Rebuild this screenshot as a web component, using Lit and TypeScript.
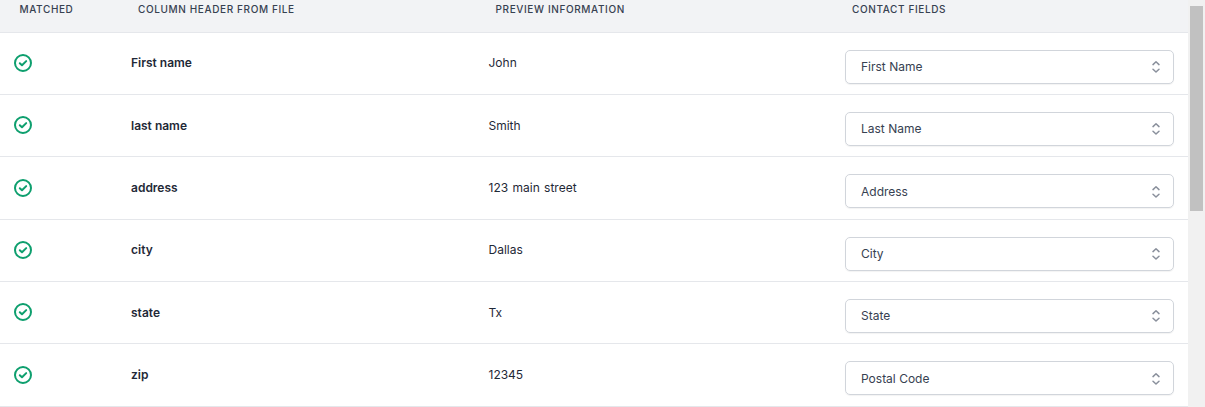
import { html, css, LitElement } from "lit";
import { customElement } from "lit/decorators.js";

const rows = [
  { header: "First name", preview: "John", field: "First Name" },
  { header: "last name", preview: "Smith", field: "Last Name" },
  { header: "address", preview: "123 main street", field: "Address" },
  { header: "city", preview: "Dallas", field: "City" },
  { header: "state", preview: "Tx", field: "State" },
  { header: "zip", preview: "12345", field: "Postal Code" },
];

@customElement("app-root")
export class AppRoot extends LitElement {
  static styles = css`
    :host {
      display: flex;
      width: 1205px;
      height: 407px;
      overflow: hidden;
      background: #fff;
      font-family: Inter, "Liberation Sans", sans-serif;
      color: #1f2937;
    }
    .table {
      width: 1188px;
      flex: none;
    }
    .head,
    .row {
      display: grid;
      grid-template-columns: 131px 357.5px 356.5px 329px;
      box-sizing: border-box;
    }
    .head {
      height: 32.7px;
      padding-top: 3px;
      background: #f2f3f5;
      border-bottom: 1px solid #e5e7eb;
      font-size: 10px;
      font-weight: 500;
      letter-spacing: 0.62px;
      line-height: 12px;
      color: #374151;
    }
    .head span {
      padding-left: 7px;
    }
    .head span:first-child {
      padding-left: 19.5px;
    }
    .row {
      height: 62.33px;
      align-items: center;
      border-bottom: 1px solid #e5e7eb;
      font-size: 12px;
      line-height: 16px;
    }
    .check {
      display: block;
      width: 20px;
      height: 20px;
      margin: -0.6px 0 0 13px;
    }
    .name {
      font-weight: 600;
    }
    .preview {
      word-spacing: 1px;
    }
    .select {
      display: flex;
      align-items: center;
      justify-content: space-between;
      box-sizing: border-box;
      height: 34px;
      padding: 0.6px 10px 0 15px;
      margin-top: 6.66px;
      border: 1px solid #d1d5db;
      border-radius: 5px;
      box-shadow: 0 1px 1px rgba(0, 0, 0, 0.05);
      color: #374151;
    }
    .select svg {
      display: block;
      width: 16px;
      height: 16px;
    }
    .scrollbar {
      flex: 1;
      padding: 6px 2px 0;
      background: #f1f1f1;
    }
    .thumb {
      height: 205px;
      background: #c1c1c1;
    }
  `;

  render() {
    return html`
      <div class="table">
        <div class="head">
          <span>MATCHED</span>
          <span>COLUMN HEADER FROM FILE</span>
          <span>PREVIEW INFORMATION</span>
          <span>CONTACT FIELDS</span>
        </div>
        ${rows.map(
          (r) => html`
            <div class="row">
              <svg class="check" viewBox="0 0 20 20" fill="none" stroke="#0e9f6e" stroke-width="2">
                <circle cx="10" cy="10" r="8"></circle>
                <path d="M6.8 10.2l2.2 2.1 4.2-4.2" stroke-linecap="round" stroke-linejoin="round"></path>
              </svg>
              <div class="name">${r.header}</div>
              <div class="preview">${r.preview}</div>
              <div class="select">
                <span>${r.field}</span>
                <svg viewBox="0 0 16 16" fill="none" stroke="#8a909c" stroke-width="1.5" stroke-linecap="round" stroke-linejoin="round">
                  <path d="M6 5.6L9 2.8 12 5.6M6 10.2L9 13 12 10.2"></path>
                </svg>
              </div>
            </div>
          `
        )}
      </div>
      <div class="scrollbar"><div class="thumb"></div></div>
    `;
  }
}
